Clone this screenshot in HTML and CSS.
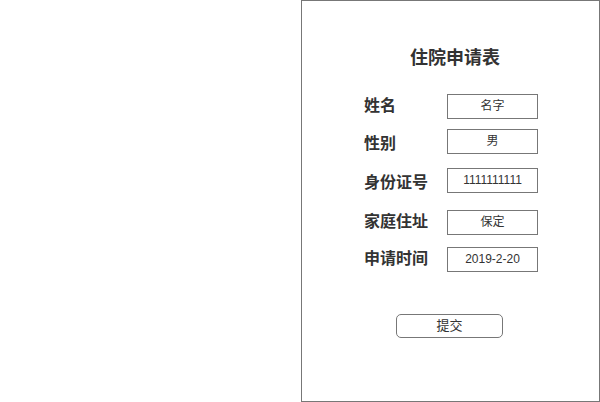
FILE: index.html
```html
<!DOCTYPE html>
<html lang="zh">
<head>
<meta charset="utf-8">
<title>住院申请表</title>
<link rel="stylesheet" href="styles.css">
</head>
<body>
<div class="page">
  <div class="panel">
    <h1 class="title">住院申请表</h1>
    <div class="form">
      <div class="row"><span class="label">姓名</span><span class="field">名字</span></div>
      <div class="row"><span class="label">性别</span><span class="field">男</span></div>
      <div class="row"><span class="label">身份证号</span><span class="field">1111111111</span></div>
      <div class="row"><span class="label">家庭住址</span><span class="field">保定</span></div>
      <div class="row"><span class="label">申请时间</span><span class="field">2019-2-20</span></div>
    </div>
    <div class="actions"><button class="submit">提交</button></div>
  </div>
</div>
</body>
</html>
```
FILE: styles.css
```css
html, body {
  margin: 0;
  padding: 0;
  background: #ffffff;
}
body {
  font-family: "Liberation Sans", "Noto Sans CJK SC", sans-serif;
  color: #333333;
}
.page {
  display: flex;
  padding-left: 301px;
  width: 600px;
  height: 402px;
  box-sizing: border-box;
}
.panel {
  width: 299px;
  height: 402px;
  box-sizing: border-box;
  border: 1px solid #777777;
  display: flex;
  flex-direction: column;
}
.title {
  margin: 43px 0 0 0;
  padding-left: 9px;
  font-size: 18px;
  line-height: 24px;
  font-weight: bold;
  text-align: center;
  font-family: "Noto Sans CJK SC", sans-serif;
  color: #333333;
}
.form {
  display: flex;
  flex-direction: column;
  margin-top: 26px;
  padding-left: 62px;
}
.row {
  display: flex;
  align-items: center;
  height: 25px;
}
.row:nth-child(2) { margin-top: 10px; }
.row:nth-child(3) { margin-top: 14px; }
.row:nth-child(4) { margin-top: 17px; }
.row:nth-child(5) { margin-top: 12px; }
.label {
  width: 83px;
  font-family: "Noto Sans CJK SC", sans-serif;
  font-size: 16px;
  font-weight: bold;
  line-height: 25px;
  position: relative;
  top: -2px;
}
.row:nth-child(2) .label,
.row:nth-child(3) .label {
  top: 1px;
}
.field {
  width: 91px;
  height: 25px;
  box-sizing: border-box;
  border: 1px solid #777777;
  font-size: 12px;
  line-height: 22px;
  text-align: center;
  font-family: "Liberation Sans", "Noto Sans CJK SC", sans-serif;
  color: #333333;
}
.actions {
  display: flex;
  margin-top: 42px;
  padding-left: 94px;
}
.submit {
  width: 107px;
  height: 24px;
  box-sizing: border-box;
  border: 1px solid #777777;
  border-radius: 5px;
  background: #ffffff;
  font-family: "Noto Sans CJK SC", sans-serif;
  font-size: 13px;
  line-height: 18px;
  color: #333333;
  padding: 0 0 2px 0;
}
```
